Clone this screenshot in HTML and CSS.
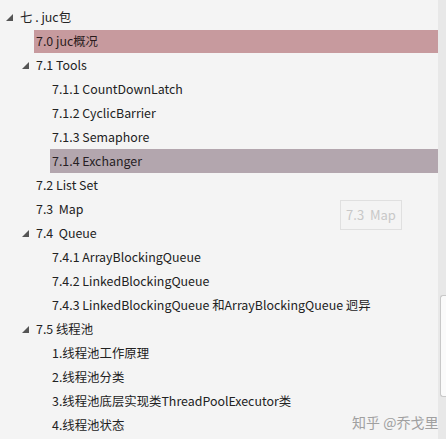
FILE: index.html
```html
<!DOCTYPE html>
<html>
<head>
<meta charset="utf-8">
<link rel="stylesheet" href="styles.css">
</head>
<body>
<div class="page">
  <div class="tree">
    <div class="row l1"><span class="tw"><svg width="7" height="7" viewBox="0 0 7 7"><polygon points="7,0 7,7 0,7" fill="#555"/></svg></span><span class="label">七 . juc包</span></div>
    <div class="row l2 leaf"><span class="label sel-red">7.0 juc概况</span></div>
    <div class="row l2"><span class="tw"><svg width="7" height="7" viewBox="0 0 7 7"><polygon points="7,0 7,7 0,7" fill="#555"/></svg></span><span class="label">7.1 Tools</span></div>
    <div class="row l3 leaf"><span class="label">7.1.1 CountDownLatch</span></div>
    <div class="row l3 leaf"><span class="label">7.1.2 CyclicBarrier</span></div>
    <div class="row l3 leaf"><span class="label">7.1.3 Semaphore</span></div>
    <div class="row l3 leaf"><span class="label sel-mauve">7.1.4 Exchanger</span></div>
    <div class="row l2 leaf"><span class="label">7.2 List Set</span></div>
    <div class="row l2 leaf"><span class="label">7.3&nbsp; Map</span></div>
    <div class="row l2"><span class="tw"><svg width="7" height="7" viewBox="0 0 7 7"><polygon points="7,0 7,7 0,7" fill="#555"/></svg></span><span class="label">7.4&nbsp; Queue</span></div>
    <div class="row l3 leaf"><span class="label">7.4.1 ArrayBlockingQueue</span></div>
    <div class="row l3 leaf"><span class="label">7.4.2 LinkedBlockingQueue</span></div>
    <div class="row l3 leaf"><span class="label">7.4.3 LinkedBlockingQueue 和ArrayBlockingQueue 迥异</span></div>
    <div class="row l2"><span class="tw"><svg width="7" height="7" viewBox="0 0 7 7"><polygon points="7,0 7,7 0,7" fill="#555"/></svg></span><span class="label">7.5 线程池</span></div>
    <div class="row l3 leaf"><span class="label">1.线程池工作原理</span></div>
    <div class="row l3 leaf"><span class="label">2.线程池分类</span></div>
    <div class="row l3 leaf"><span class="label">3.线程池底层实现类ThreadPoolExecutor类</span></div>
    <div class="row l3 leaf"><span class="label">4.线程池状态</span></div>
  </div>
  <div class="scrollbar"><div class="thumb"></div></div>
  <div class="tooltip">7.3&nbsp; Map</div>
  <div class="watermark">知乎 @乔戈里</div>
</div>
</body>
</html>
```

FILE: styles.css
```css
html, body {
  margin: 0;
  padding: 0;
  background: #f4f4f4;
}
.page {
  position: relative;
  width: 446px;
  height: 439px;
  overflow: hidden;
  display: flex;
  font-family: "Noto Sans CJK SC", "Noto Sans", sans-serif;
  font-size: 12.4px;
  color: #222;
}
.tree {
  flex: 1;
  padding-top: 5px;
}
.row {
  display: flex;
  align-items: center;
  height: 24px;
  white-space: nowrap;
}
.l1 { padding-left: 6px; }
.l2 { padding-left: 22px; }
.l3 { padding-left: 38px; }
.tw {
  width: 14px;
  display: flex;
  align-items: center;
  margin-top: 1px;
}
.l2.leaf { padding-left: 34px; }
.l3.leaf { padding-left: 50px; }
.leaf .label {
  padding-left: 2px;
}
.label {
  flex: 1;
  height: 24px;
  line-height: 24px;
}
.sel-red {
  background: #c79a9e;
  color: #2a1a1c;
  height: 23px;
  line-height: 23px;
}
.sel-mauve {
  background: #b3a6ae;
  color: #261e24;
}
.scrollbar {
  width: 8px;
  background: #e8e8e8;
}
.thumb {
  margin-top: 295px;
  margin-left: 2px;
  height: 100px;
  background: #fafafa;
  border: 1px solid #c8c8c8;
  border-right: none;
  border-radius: 3px 0 0 3px;
}
.tooltip {
  position: absolute;
  left: 340px;
  top: 200px;
  width: 60px;
  height: 28px;
  border: 1px solid #e0e0e0;
  color: #c8c8c8;
  font-size: 13px;
  line-height: 28px;
  text-align: center;
}
.watermark {
  position: absolute;
  left: 352px;
  top: 412px;
  font-size: 14px;
  color: #a0a0a0;
  white-space: nowrap;
}
```
